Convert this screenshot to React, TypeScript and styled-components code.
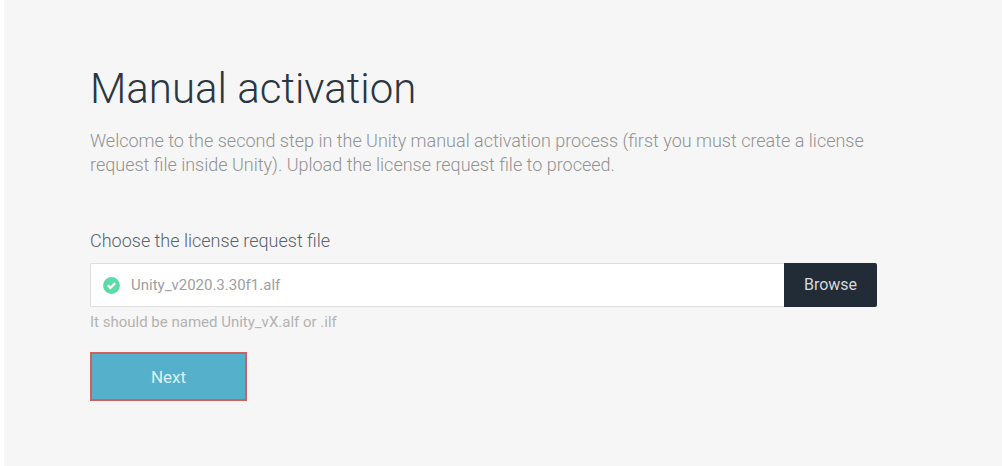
import React, { useState } from "react";
import styled, { createGlobalStyle } from "styled-components";

const GlobalStyle = createGlobalStyle`
  *, *::before, *::after { box-sizing: border-box; }
  body { margin: 0; background: #fff; font-family: Roboto, "Liberation Sans", sans-serif; }
`;

const Page = styled.main`
  min-height: 100vh;
  margin-left: 4px;
  padding: 61px 125px 64px 86px;
  background: #f6f6f6;
`;

const Title = styled.h1`
  margin: 0 0 12px;
  color: #2c3643;
  font-size: 42px;
  line-height: 56px;
  font-weight: 300;
`;

const Intro = styled.p`
  margin: 0 0 52px;
  max-width: 780px;
  color: #929292;
  font-size: 18px;
  line-height: 24px;
  font-weight: 300;
`;

const Form = styled.form`
  display: flex;
  flex-direction: column;
  align-items: flex-start;
`;

const Label = styled.label`
  margin-bottom: 10px;
  color: #5a626d;
  font-size: 18px;
  line-height: 24px;
  font-weight: 300;
`;

const FileRow = styled.div`
  display: flex;
  width: 100%;
  height: 44px;
`;

const FileField = styled.div`
  display: flex;
  flex: 1;
  align-items: center;
  gap: 11px;
  padding-left: 12px;
  background: #fff;
  border: 1px solid #dedede;
  border-right: 0;
  border-radius: 2px 0 0 2px;
`;

const FileInput = styled.input`
  flex: 1;
  min-width: 0;
  padding: 0;
  border: 0;
  outline: 0;
  background: transparent;
  color: #a0a0a0;
  font: 400 15px/24px Roboto, "Liberation Sans", sans-serif;
`;

const BrowseButton = styled.button`
  width: 93px;
  border: 0;
  border-radius: 0 2px 2px 0;
  background: #222c37;
  color: #d5d8db;
  font: 400 16px/24px Roboto, "Liberation Sans", sans-serif;
`;

const Hint = styled.p`
  margin: 3px 0 18px;
  color: #b3b3b3;
  font-size: 15px;
  line-height: 24px;
  font-weight: 400;
`;

const NextButton = styled.button`
  width: 157px;
  height: 49px;
  border: 2px solid #d0605e;
  background: #55b0cb;
  color: #d9f0f5;
  font: 400 17px/24px Roboto, "Liberation Sans", sans-serif;
`;

function CheckIcon() {
  return (
    <svg width="17" height="17" viewBox="0 0 17 17" aria-hidden="true">
      <circle cx="8.5" cy="8.5" r="8.4" fill="#5bdbaa" />
      <path d="M4.8 8.3l2.6 2.6 4.8-4.8" fill="none" stroke="#fff" strokeWidth="2.2" />
    </svg>
  );
}

export default function App() {
  const [file, setFile] = useState("Unity_v2020.3.30f1.alf");
  return (
    <>
      <GlobalStyle />
      <Page>
        <Title>Manual activation</Title>
        <Intro>
          Welcome to the second step in the Unity manual activation process (first you must create a license
          request file inside Unity). Upload the license request file to proceed.
        </Intro>
        <Form onSubmit={(e) => e.preventDefault()}>
          <Label htmlFor="license">Choose the license request file</Label>
          <FileRow>
            <FileField>
              <CheckIcon />
              <FileInput id="license" type="text" value={file} onChange={(e) => setFile(e.target.value)} />
            </FileField>
            <BrowseButton type="button">Browse</BrowseButton>
          </FileRow>
          <Hint>It should be named Unity_vX.alf or .ilf</Hint>
          <NextButton type="submit">Next</NextButton>
        </Form>
      </Page>
    </>
  );
}
